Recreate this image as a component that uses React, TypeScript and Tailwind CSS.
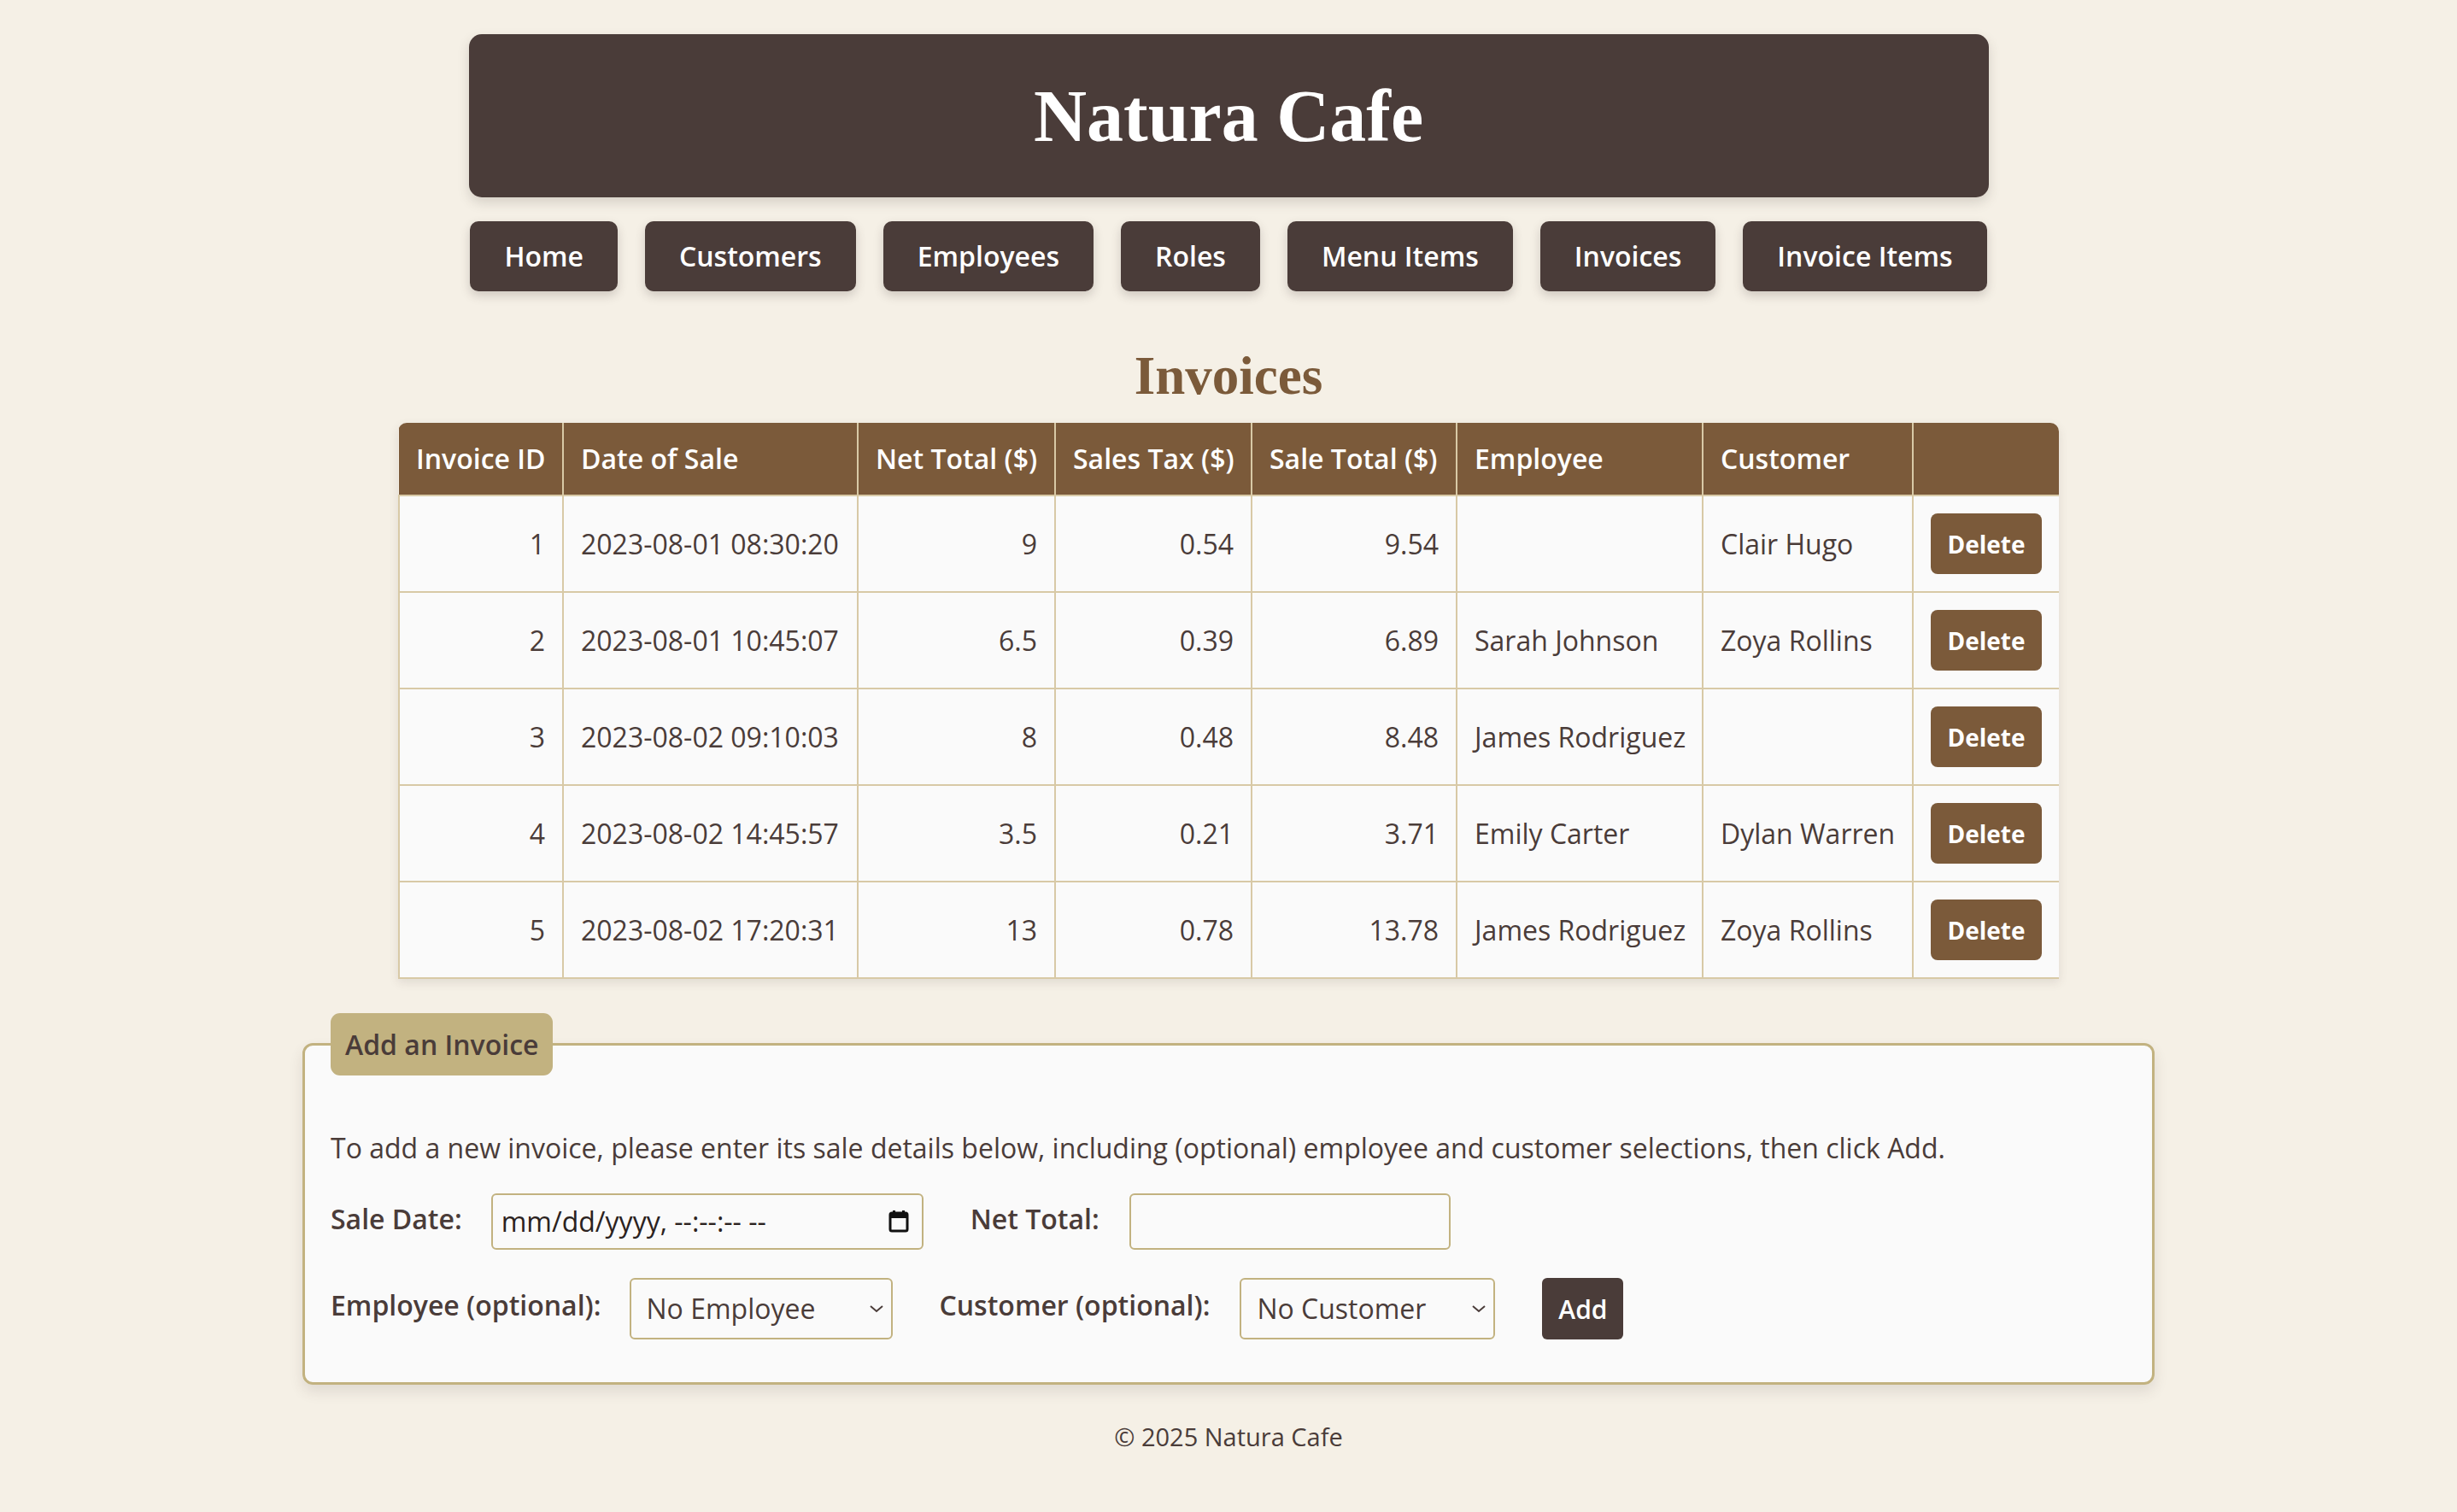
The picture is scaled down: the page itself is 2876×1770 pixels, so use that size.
import { useState } from 'react';

type Invoice = {
  id: number;
  date: string;
  net: string;
  tax: string;
  total: string;
  employee: string;
  customer: string;
};

const invoices: Invoice[] = [
  { id: 1, date: '2023-08-01 08:30:20', net: '9', tax: '0.54', total: '9.54', employee: '', customer: 'Clair Hugo' },
  { id: 2, date: '2023-08-01 10:45:07', net: '6.5', tax: '0.39', total: '6.89', employee: 'Sarah Johnson', customer: 'Zoya Rollins' },
  { id: 3, date: '2023-08-02 09:10:03', net: '8', tax: '0.48', total: '8.48', employee: 'James Rodriguez', customer: '' },
  { id: 4, date: '2023-08-02 14:45:57', net: '3.5', tax: '0.21', total: '3.71', employee: 'Emily Carter', customer: 'Dylan Warren' },
  { id: 5, date: '2023-08-02 17:20:31', net: '13', tax: '0.78', total: '13.78', employee: 'James Rodriguez', customer: 'Zoya Rollins' },
];

const navItems = ['Home', 'Customers', 'Employees', 'Roles', 'Menu Items', 'Invoices', 'Invoice Items'];

const columns = [
  { label: 'Invoice ID', width: 192 },
  { label: 'Date of Sale', width: 345 },
  { label: 'Net Total ($)', width: 231 },
  { label: 'Sales Tax ($)', width: 230 },
  { label: 'Sale Total ($)', width: 240 },
  { label: 'Employee', width: 288 },
  { label: 'Customer', width: 246 },
  { label: '', width: 172 },
];

function Chevron() {
  return (
    <svg width="18" height="12" viewBox="0 0 18 12" className="pointer-events-none absolute right-[10px] top-1/2 -translate-y-1/2">
      <path d="M2 3 L9 9 L16 3" fill="none" stroke="#4a3c39" strokeWidth="2" />
    </svg>
  );
}

function CalendarIcon() {
  return (
    <svg width="26" height="30" viewBox="0 0 26 30">
      <rect x="3" y="5" width="20" height="21" rx="2" fill="none" stroke="#111" strokeWidth="3" />
      <rect x="3" y="5" width="20" height="6" fill="#111" />
      <rect x="6" y="2" width="3" height="5" fill="#111" />
      <rect x="17" y="2" width="3" height="5" fill="#111" />
    </svg>
  );
}

export default function App() {
  const [employee, setEmployee] = useState('');
  const [customer, setCustomer] = useState('');
  const [netTotal, setNetTotal] = useState('');

  return (
    <div className="min-h-screen bg-[#f5f0e6] text-[#4a3c39] flex flex-col items-center font-['Open_Sans',sans-serif] pb-[40px]">
      {/* Header */}
      <header className="mt-[40px] w-[1779px] h-[191px] rounded-[15px] bg-[#4a3c39] flex items-center justify-center shadow-[0_6px_14px_rgba(74,60,57,0.18)]">
        <h1 className="text-white text-[86px] font-bold font-['Liberation_Serif',serif] leading-none">Natura Cafe</h1>
      </header>

      {/* Nav */}
      <nav className="mt-[28px] flex gap-[32px]">
        {navItems.map((item) => (
          <button
            key={item}
            className="h-[82px] px-[40px] rounded-[10px] bg-[#4a3c39] text-white text-[32px] font-semibold shadow-[0_5px_12px_rgba(74,60,57,0.22)]"
          >
            {item}
          </button>
        ))}
      </nav>

      <h2 className="mt-[59px] leading-[80px] text-[63px] font-bold text-[#7b5a3a] font-['Liberation_Serif',serif]">Invoices</h2>

      {/* Table */}
      <div className="mt-[15px] w-[1944px] rounded-t-[10px] overflow-hidden shadow-[0_4px_12px_rgba(74,60,57,0.12)]">
        <table className="w-full table-fixed border-collapse text-[32px]">
          <colgroup>
            {columns.map((c, i) => (
              <col key={i} style={{ width: c.width }} />
            ))}
          </colgroup>
          <thead>
            <tr className="bg-[#7b5a3a] text-white">
              {columns.map((c, i) => (
                <th key={i} className="h-[85px] px-[20px] text-left font-semibold whitespace-nowrap border-2 border-[#d8c9a6] border-t-0 first:border-l-0 last:border-r-0">
                  {c.label}
                </th>
              ))}
            </tr>
          </thead>
          <tbody className="bg-[#fafafa]">
            {invoices.map((inv) => (
              <tr key={inv.id}>
                <td className="h-[113px] px-[20px] text-right border-2 border-[#d8c9a6]">{inv.id}</td>
                <td className="px-[20px] whitespace-nowrap border-2 border-[#d8c9a6]">{inv.date}</td>
                <td className="px-[20px] text-right border-2 border-[#d8c9a6]">{inv.net}</td>
                <td className="px-[20px] text-right border-2 border-[#d8c9a6]">{inv.tax}</td>
                <td className="px-[20px] text-right border-2 border-[#d8c9a6]">{inv.total}</td>
                <td className="px-[20px] whitespace-nowrap border-2 border-[#d8c9a6]">{inv.employee}</td>
                <td className="px-[20px] whitespace-nowrap border-2 border-[#d8c9a6]">{inv.customer}</td>
                <td className="px-[20px] border-2 border-[#d8c9a6]">
                  <button className="w-[130px] h-[71px] rounded-[8px] bg-[#7b5a3a] text-white text-[28px] font-bold">Delete</button>
                </td>
              </tr>
            ))}
          </tbody>
        </table>
      </div>

      {/* Add form */}
      <fieldset className="mt-[40px] w-[2168px] border-[3px] border-[#c2b280] rounded-[12px] bg-[#fafafa] px-[30px] pb-[50px] shadow-[0_8px_16px_rgba(74,60,57,0.12)]">
        <legend className="h-[73px] px-[17px] rounded-[11px] bg-[#c2b280] text-[32px] font-semibold leading-[73px]">Add an Invoice</legend>
        <p className="mt-[61px] text-[32px] leading-[48px]">
          To add a new invoice, please enter its sale details below, including (optional) employee and customer selections, then click Add.
        </p>

        <div className="mt-[29px] flex items-center">
          <label className="text-[32px] font-semibold mr-[34px] mb-[6px]">Sale Date:</label>
          <div className="w-[506px] h-[66px] border-2 border-[#c2b280] rounded-[6px] bg-[#fafafa] flex items-center justify-between pl-[10px] pr-[14px] mr-[55px]">
            <span className="text-[32px] text-[#2b2220]">mm/dd/yyyy, --:--:-- --</span>
            <CalendarIcon />
          </div>
          <label className="text-[32px] font-semibold mr-[35px] mb-[6px]">Net Total:</label>
          <input
            value={netTotal}
            onChange={(e) => setNetTotal(e.target.value)}
            className="w-[376px] h-[66px] border-2 border-[#c2b280] rounded-[6px] bg-[#fafafa] px-[10px] text-[32px] outline-none"
          />
        </div>

        <div className="mt-[33px] flex items-center">
          <label className="text-[32px] font-semibold mr-[33px] mb-[8px]">Employee (optional):</label>
          <div className="relative mr-[55px]">
            <select
              value={employee}
              onChange={(e) => setEmployee(e.target.value)}
              className="appearance-none w-[308px] h-[72px] border-2 border-[#c2b280] rounded-[6px] bg-[#fafafa] pl-[18px] text-[32px] text-[#4a3c39] outline-none"
            >
              <option value="">No Employee</option>
              <option value="sarah">Sarah Johnson</option>
              <option value="james">James Rodriguez</option>
              <option value="emily">Emily Carter</option>
            </select>
            <Chevron />
          </div>
          <label className="text-[32px] font-semibold mr-[35px] mb-[8px]">Customer (optional):</label>
          <div className="relative mr-[55px]">
            <select
              value={customer}
              onChange={(e) => setCustomer(e.target.value)}
              className="appearance-none w-[299px] h-[72px] border-2 border-[#c2b280] rounded-[6px] bg-[#fafafa] pl-[18px] text-[32px] text-[#4a3c39] outline-none"
            >
              <option value="">No Customer</option>
              <option value="clair">Clair Hugo</option>
              <option value="zoya">Zoya Rollins</option>
              <option value="dylan">Dylan Warren</option>
            </select>
            <Chevron />
          </div>
          <button className="w-[95px] h-[72px] rounded-[6px] bg-[#4a3c39] text-white text-[30px] font-semibold">Add</button>
        </div>
      </fieldset>

      <footer className="mt-[41px] text-[29px] leading-[40px]">© 2025 Natura Cafe</footer>
    </div>
  );
}
